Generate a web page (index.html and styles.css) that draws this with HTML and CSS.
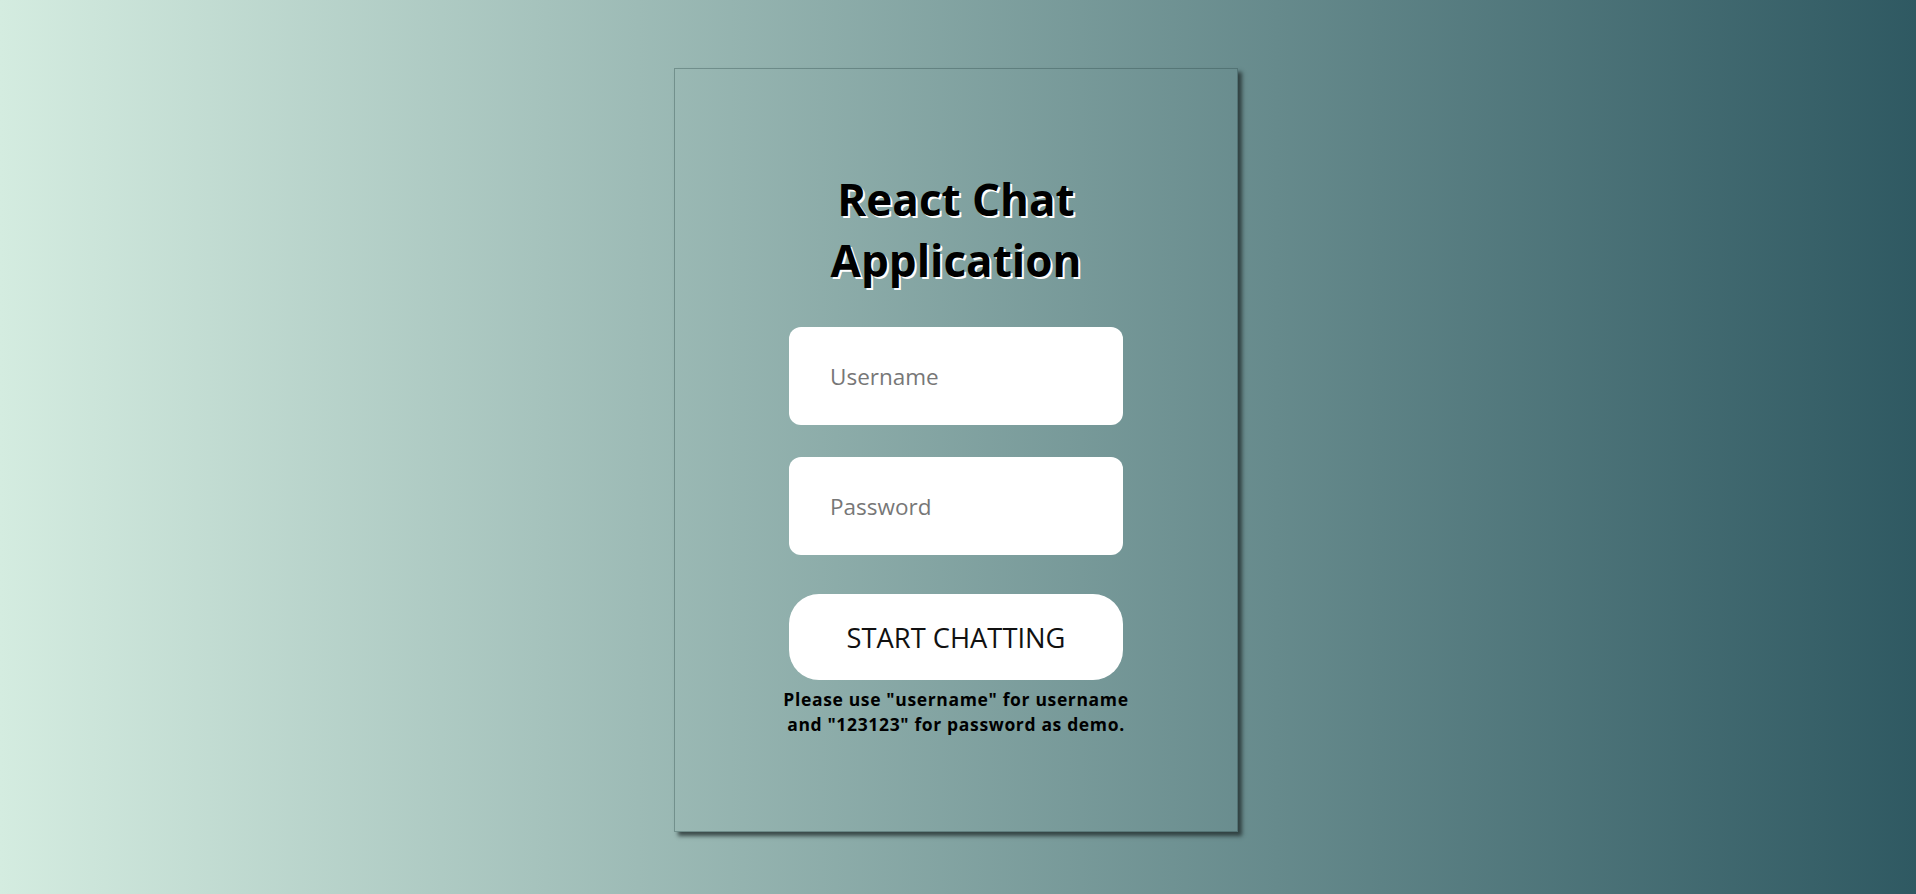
FILE: index.html
```html
<!DOCTYPE html>
<html lang="en">
<head>
<meta charset="utf-8">
<title>React Chat Application</title>
<link rel="stylesheet" href="styles.css">
</head>
<body>
<main class="page">
  <div class="card">
    <form class="login-form">
      <h1 class="title">React Chat Application</h1>
      <input class="field" type="text" placeholder="Username">
      <input class="field" type="password" placeholder="Password">
      <button class="start-btn" type="button">START CHATTING</button>
      <p class="note">Please use "username" for username and "123123" for password as demo.</p>
    </form>
  </div>
</main>
</body>
</html>
```
FILE: styles.css
```css
* { box-sizing: border-box; }
html, body {
  margin: 0;
  height: 100%;
}
body {
  background: linear-gradient(to right, #d4ece0 0%, #2f5962 100%);
  font-family: "Open Sans", "Noto Sans", sans-serif;
  overflow: hidden;
}
.page {
  height: 100%;
  display: flex;
  align-items: center;
  justify-content: center;
}
.card {
  width: 564px;
  height: 764px;
  margin-left: -4px;
  margin-top: 6px;
  border: 1px solid rgba(40, 70, 70, 0.35);
  box-shadow: 4px 4px 4px rgba(30, 40, 40, 0.75);
  display: flex;
  justify-content: center;
}
.login-form {
  width: 334px;
  display: flex;
  flex-direction: column;
  align-items: center;
  padding-top: 100px;
}
.title {
  margin: 0 0 36px;
  font-size: 44px;
  line-height: 61px;
  font-weight: 700;
  color: #000;
  text-align: center;
  text-shadow: 2px 2px 0 #fff;
}
.field {
  width: 334px;
  height: 98px;
  border: none;
  border-radius: 12px;
  background: #fff;
  padding: 0 0 0 41px;
  font-family: inherit;
  font-size: 22.5px;
  color: #333;
  outline: none;
  margin-bottom: 32px;
}
.field::placeholder {
  color: #777;
}
.field + .field {
  margin-bottom: 39px;
}
.start-btn {
  width: 334px;
  height: 86px;
  border: none;
  border-radius: 30px;
  background: #fff;
  font-family: inherit;
  font-size: 27.3px;
  color: #111;
  cursor: pointer;
}
.note {
  margin: 7px 0 0;
  width: 370px;
  font-size: 17.5px;
  line-height: 24.5px;
  font-weight: 700;
  color: #000;
  text-align: center;
  letter-spacing: 0.65px;
}
```
